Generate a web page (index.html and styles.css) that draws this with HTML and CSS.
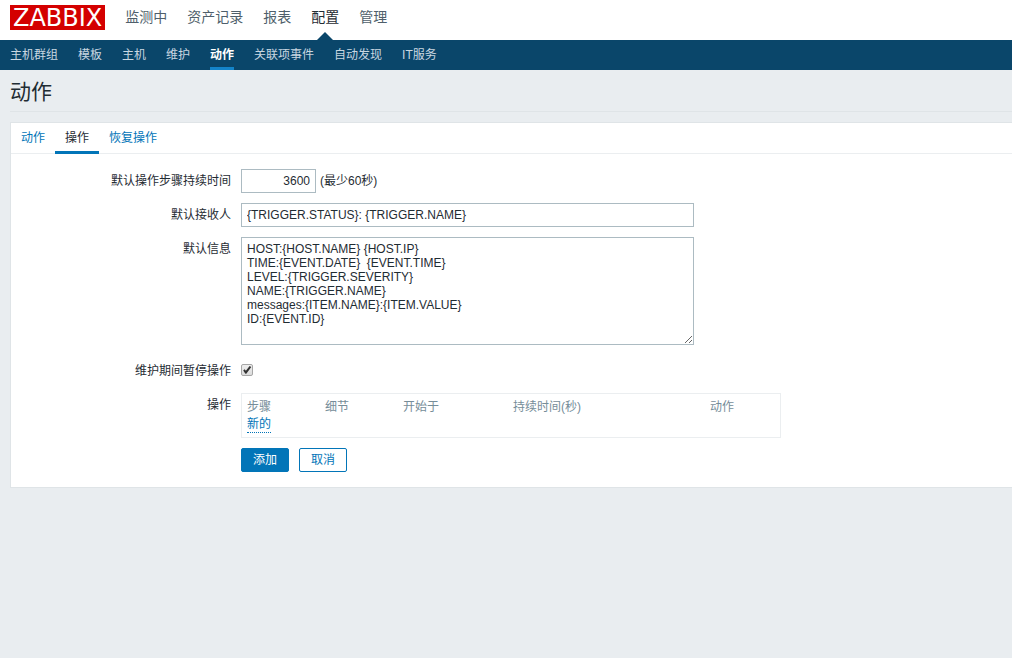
FILE: index.html
```html
<!DOCTYPE html>
<html lang="zh-CN">
<head>
<meta charset="utf-8">
<meta name="viewport" content="width=device-width, initial-scale=1">
<title>动作</title>
<link rel="stylesheet" href="styles.css">
</head>
<body>
<header class="top">
  <a class="logo" href="#">ZABBIX</a>
  <nav class="main-nav">
    <a href="#">监测中</a>
    <a href="#">资产记录</a>
    <a href="#">报表</a>
    <a class="selected" href="#">配置</a>
    <a href="#">管理</a>
  </nav>
</header>
<nav class="sub-nav">
  <a href="#">主机群组</a>
  <a href="#">模板</a>
  <a href="#">主机</a>
  <a href="#">维护</a>
  <a class="selected" href="#">动作</a>
  <a href="#">关联项事件</a>
  <a href="#">自动发现</a>
  <a href="#">IT服务</a>
</nav>
<main class="page">
  <h1 class="title">动作</h1>
  <form class="panel">
    <nav class="tabs">
      <a href="#">动作</a>
      <a class="selected" href="#">操作</a>
      <a href="#">恢复操作</a>
    </nav>
    <div class="form">
      <label class="label" for="period">默认操作步骤持续时间</label>
      <div class="field inline">
        <input class="text number" id="period" type="text" value="3600">
        <span>(最少60秒)</span>
      </div>

      <label class="label" for="subject">默认接收人</label>
      <input class="text wide" id="subject" type="text" value="{TRIGGER.STATUS}: {TRIGGER.NAME}">

      <label class="label" for="message">默认信息</label>
      <textarea class="text wide area" id="message" spellcheck="false">HOST:{HOST.NAME} {HOST.IP}
TIME:{EVENT.DATE}  {EVENT.TIME}
LEVEL:{TRIGGER.SEVERITY}
NAME:{TRIGGER.NAME}
messages:{ITEM.NAME}:{ITEM.VALUE}
ID:{EVENT.ID}</textarea>

      <label class="label middle" for="pause">维护期间暂停操作</label>
      <div class="field check-row">
        <span class="check">
          <input class="check-box" id="pause" type="checkbox" checked>
          <svg class="tick" viewBox="0 0 12 12" aria-hidden="true"><path d="M2.2 6.4 L3.6 5.2 L4.9 6.7 L8.6 1.9 L10.3 3.1 L5.3 9.8 L4.4 9.8 Z"/></svg>
        </span>
      </div>

      <span class="label">操作</span>
      <div class="list">
        <table class="operations">
          <thead>
            <tr>
              <th class="col-step">步骤</th>
              <th class="col-detail">细节</th>
              <th class="col-start">开始于</th>
              <th class="col-duration">持续时间(秒)</th>
              <th>动作</th>
            </tr>
          </thead>
          <tbody>
            <tr>
              <td colspan="5"><button class="link" type="button">新的</button></td>
            </tr>
          </tbody>
        </table>
      </div>

      <div class="buttons">
        <button class="button primary" type="submit">添加</button>
        <button class="button" type="button">取消</button>
      </div>
    </div>
  </form>
</main>
</body>
</html>
```
FILE: styles.css
```css
* {
  box-sizing: border-box;
}

body {
  margin: 0;
  background: #e9edf0;
  color: #1f2c33;
  font: 12px/14px "Liberation Sans", "Noto Sans CJK SC", sans-serif;
}

a {
  color: #0275b8;
  text-decoration: none;
}

.top {
  display: flex;
  align-items: center;
  gap: 20px;
  height: 40px;
  padding: 0 10px 5px;
  background: #fff;
}

.logo {
  padding: 1px 3px 0;
  background: #d40000;
  color: #fff;
  font: 24px/24px "DejaVu Sans", sans-serif;
}

.main-nav {
  display: flex;
  gap: 20px;
  font-size: 14px;
  line-height: 35px;
}

.main-nav a {
  position: relative;
  color: #4f5f6b;
}

.main-nav .selected {
  color: #1f2c33;
}

.main-nav .selected::after {
  content: "";
  position: absolute;
  bottom: -5px;
  left: 50%;
  margin-left: -8px;
  border: 8px solid transparent;
  border-top: 0;
  border-bottom-color: #0a466a;
}

.sub-nav {
  display: flex;
  gap: 20px;
  height: 30px;
  padding: 0 10px;
  background: #0a466a;
  line-height: 30px;
}

.sub-nav a {
  color: #c9d7e1;
}

.sub-nav .selected {
  border-bottom: 3px solid #1484c9;
  color: #fff;
  font-weight: bold;
}

.page {
  padding-left: 10px;
}

.title {
  margin: 0 0 10px;
  padding: 7px 0 4px;
  border-bottom: 1px solid #dfe4e7;
  font-size: 21px;
  font-weight: normal;
  line-height: 30px;
}

.panel {
  border: 1px solid #dfe4e7;
  border-right: 0;
  background: #fff;
}

.tabs {
  display: flex;
  height: 31px;
  border-bottom: 1px solid #ebeef0;
  line-height: 30px;
}

.tabs a {
  height: 31px;
  padding: 0 10px;
}

.tabs .selected {
  border-bottom: 3px solid #0275b8;
  color: #1f2c33;
}

.form {
  display: grid;
  grid-template-columns: 220px minmax(0, 1fr);
  gap: 10px;
  justify-items: start;
  padding: 15px 10px 15px 0;
}

.label {
  justify-self: end;
  line-height: 24px;
}

.inline {
  display: flex;
  align-items: center;
  gap: 4px;
}

.text {
  display: block;
  height: 24px;
  margin: 0;
  padding: 0 5px;
  border: 1px solid #acbbc2;
  border-radius: 0;
  background: #fff;
  color: #1f2c33;
  font: inherit;
}

.number {
  width: 75px;
  text-align: right;
}

.wide {
  width: 453px;
  max-width: 100%;
}

.area {
  height: 108px;
  padding: 4px 5px;
  resize: both;
}

.middle,
.check-row {
  height: 28px;
  padding-top: 2px;
}

.middle {
  line-height: 28px;
}

.check-row {
  display: flex;
  align-items: center;
}

.check {
  position: relative;
  display: block;
  width: 12px;
  height: 12px;
}

.check-box {
  display: block;
  width: 12px;
  height: 12px;
  margin: 0;
  border: 1px solid #a6a6a6;
  border-radius: 2px;
  background: linear-gradient(#eee, #dcdcdc);
  appearance: none;
}

.tick {
  position: absolute;
  inset: 0;
  visibility: hidden;
  fill: #333;
  pointer-events: none;
}

.check-box:checked + .tick {
  visibility: visible;
}

.list {
  width: 540px;
  max-width: 100%;
  padding: 6px 5px 4px;
  border: 1px solid #ebeef0;
}

.operations {
  width: 100%;
  border-collapse: collapse;
  table-layout: fixed;
}

.operations th,
.operations td {
  padding: 0;
  text-align: left;
  vertical-align: top;
}

.operations th {
  height: 17px;
  color: #768d99;
  font-weight: normal;
  line-height: 15px;
}

.operations td {
  height: 16px;
}

.col-step,
.col-detail {
  width: 78px;
}

.col-start {
  width: 110px;
}

.col-duration {
  width: 197px;
}

.link {
  display: block;
  padding: 0;
  border: 0;
  border-bottom: 1px dotted #0275b8;
  background: none;
  color: #0275b8;
  font: inherit;
  line-height: 15px;
}

.buttons {
  display: flex;
  grid-column: 2;
  gap: 10px;
}

.button {
  height: 24px;
  padding: 0 11px;
  border: 1px solid #0275b8;
  border-radius: 2px;
  background: #fff;
  color: #0275b8;
  font: inherit;
}

.primary {
  background: #0275b8;
  color: #fff;
}
```
